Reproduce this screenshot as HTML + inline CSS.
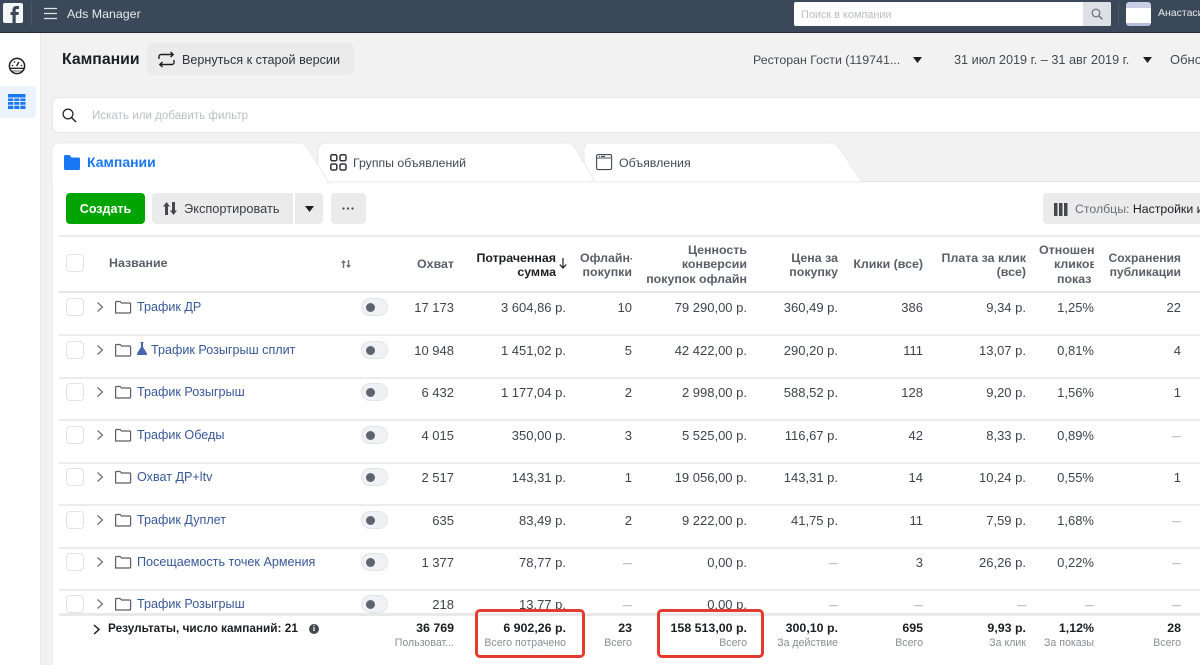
<!DOCTYPE html>
<html lang="ru"><head><meta charset="utf-8"><title>Ads Manager</title>
<style>
*{box-sizing:border-box}
html,body{margin:0;padding:0;width:1200px;height:665px;overflow:hidden}
body{position:relative;background:#f2f2f2;font-family:"Liberation Sans",sans-serif;color:#444950;font-size:13px}
.a{position:absolute;white-space:nowrap}
.top{left:0;top:0;width:1200px;height:33px;background:#3b4859;border-bottom:1px solid #232b36}
.side{left:0;top:33px;width:41px;height:632px;background:#fff;border-right:1px solid #e8e8e8}
.panel{left:52px;top:182px;width:1148px;height:483px;background:#fff}
.btn{background:#ebebeb;border-radius:5px}
.sep{left:59px;width:1141px;height:2px;background:#ececec}
.row{position:absolute;left:0;width:1200px;height:20px}
.row span{position:absolute;top:0;line-height:20px;text-align:right;white-space:nowrap;color:#3f434a}
.row span.d{font-size:9px;color:#85888d}
.c1{right:746px}.c2{right:634px}.c3{right:568px}.c4{right:453px}.c5{right:362px}.c6{right:277px}.c7{right:174px}.c8{right:106px}.c9{right:19px}
.row .nm{left:137px;top:-1px;text-align:left;color:#385898;font-size:12.6px}
.cb{position:absolute;left:66px;width:18px;height:18px;border:1px solid #e2e3e6;border-radius:4px;background:#fff}
.tg{position:absolute;left:361px;width:27px;height:18px;border-radius:9px;background:#f0f1f4;border:1px solid #e2e4e8}
.tg:after{content:"";position:absolute;left:3.500px;top:3.500px;width:9px;height:9px;border-radius:50%;background:#5d6470}
.h{position:absolute;text-align:right;font-weight:bold;color:#5a5f67;font-size:12.4px;line-height:14px;white-space:nowrap;overflow:hidden}
.f{position:absolute;top:621px;height:32px;text-align:right;white-space:nowrap}
.f b{display:block;color:#1c1e21;font-size:12.4px;line-height:15px}
.f i{display:block;font-style:normal;color:#8a8d91;font-size:10.6px;line-height:13px;margin-top:1px}
.red{position:absolute;top:609px;height:49px;border:3px solid #e53a30;border-radius:5px}
.ic{position:absolute;overflow:visible}
</style></head><body>

<div class="a top"></div>
<div class="a" style="left:3px;top:3px;width:20px;height:20px;background:#f4f5f7;border-radius:2px"></div>
<svg class="ic" style="left:3px;top:3px" width="20" height="20" viewBox="0 0 20 20"><path d="M9.500 20v-8H7.500V9H9.500V7C9.500 4.500 11 3 13.200 3h2.800v3h-1.800c-1 0-1.500.5-1.500 1.300V9h3.200l-.5 3h-2.700v8z" fill="#3b4859"/></svg>
<div class="a" style="left:31px;top:2px;width:1px;height:24px;background:#4a586a"></div>
<svg class="ic" style="left:44px;top:7px" width="14" height="13"><path d="M0 1.500h13M0 6.500h13M0 11.500h13" stroke="#dfe3e8" stroke-width="1.300" fill="none"/></svg>
<div class="a" style="left:67px;top:7px;color:#e6e9ed;font-size:12.400px;line-height:15px">Ads Manager</div>
<div class="a" style="left:794px;top:2px;width:317px;height:24px;background:#fff;border-radius:2px"></div>
<div class="a" style="left:1083px;top:2px;width:28px;height:24px;background:#dde0e4;border-radius:0 2px 2px 0"></div>
<div class="a" style="left:801px;top:8px;color:#b9bcc1;font-size:10.900px;line-height:14px">Поиск в компании</div>
<svg class="ic" style="left:1091px;top:8px" width="13" height="13"><circle cx="5" cy="5" r="3.800" fill="none" stroke="#6a717b" stroke-width="1.200"/><path d="M8 8l3.400 3.400" stroke="#6a717b" stroke-width="1.500"/></svg>
<div class="a" style="left:1118px;top:2px;width:1px;height:24px;background:#4a586a"></div>
<div class="a" style="left:1126px;top:2px;width:25px;height:24px;background:#fff;border-radius:3px;border-top:6px solid #c9cde6;border-bottom:3px solid #b7bce0"></div>
<div class="a" style="left:1158px;top:6px;color:#e6e9ed;font-size:10.500px;line-height:15px">Анастасия</div>

<div class="a side"></div>
<svg class="ic" style="left:8px;top:57px" width="18" height="18" viewBox="0 0 18 18"><circle cx="9" cy="9" r="7.600" fill="none" stroke="#1c1e21" stroke-width="1.500"/><path d="M2 11.300h14" stroke="#1c1e21" stroke-width="1.300"/><path d="M3.500 14h11" stroke="#1c1e21" stroke-width="0.700"/><path d="M8.500 9l2.400-4" stroke="#1c1e21" stroke-width="1.300"/><circle cx="4.500" cy="8.500" r=".8" fill="#1c1e21"/><circle cx="6.500" cy="5" r=".8" fill="#1c1e21"/><circle cx="13.500" cy="8.500" r=".8" fill="#1c1e21"/></svg>
<div class="a" style="left:0;top:86px;width:36px;height:32px;background:#edf3fd;border-radius:0 4px 4px 0"></div>
<svg class="ic" style="left:8px;top:94px" width="18" height="15" viewBox="0 0 18 15"><path d="M.5 0h16.500a.5.5 0 0 1 .5.5v3H0v-3zM0 4.500h5.300v2.500H0zM6.300 4.500h5v2.500h-5zM12.300 4.500h5.200v2.500h-5.200zM0 8h5.300v2.800H0zM6.300 8h5v2.800h-5zM12.300 8h5.200v2.800h-5.200zM0 11.800h5.300V15H0zM6.300 11.800h5V15h-5zM12.300 11.800h5.200V15h-5.200z" fill="#1877f2"/></svg>

<div class="a" style="left:62px;top:50px;color:#1c1e21;font-size:15.800px;font-weight:bold;line-height:20px">Кампании</div>
<div class="a btn" style="left:147px;top:43px;width:207px;height:32px"></div>
<svg class="ic" style="left:158px;top:51px" width="17" height="17" viewBox="0 0 17 17"><path d="M1 8V5.500A2 2 0 0 1 3 3.500h12M12.500 1l2.700 2.500L12.500 6M16 9v2.500a2 2 0 0 1-2 2H2M4.500 11l-2.700 2.500L4.500 16" fill="none" stroke="#1c1e21" stroke-width="1.400"/></svg>
<div class="a" style="left:182px;top:52px;color:#2f3237;font-size:12.600px;line-height:16px">Вернуться к старой версии</div>
<div class="a" style="left:753px;top:52px;color:#444950;font-size:12.400px;line-height:16px">Ресторан Гости (119741...</div>
<svg class="ic" style="left:913px;top:57px" width="9" height="6"><path d="M0 0h9L4.500 6z" fill="#1c1e21"/></svg>
<div class="a" style="left:954px;top:52px;color:#444950;font-size:12.700px;line-height:16px">31 июл 2019 г. – 31 авг 2019 г.</div>
<svg class="ic" style="left:1143px;top:57px" width="9" height="6"><path d="M0 0h9L4.500 6z" fill="#1c1e21"/></svg>
<div class="a" style="left:1170px;top:52px;color:#444950;font-size:13px;line-height:16px">Обновить</div>

<div class="a" style="left:52px;top:97px;width:1160px;height:36px;background:#fff;border:1px solid #e6e6e6;border-radius:7px"></div>
<svg class="ic" style="left:62px;top:108px" width="15" height="15"><circle cx="6" cy="6" r="4.900" fill="none" stroke="#1c1e21" stroke-width="1.200"/><path d="M9.500 9.500l4.500 4.500" stroke="#1c1e21" stroke-width="1.400"/></svg>
<div class="a" style="left:92px;top:108px;color:#bcc0c4;font-size:11.600px;line-height:15px">Искать или добавить фильтр</div>

<div class="a panel"></div>
<svg class="ic" style="left:0;top:0" width="1200" height="200">
<path d="M52 181.500H1200" stroke="#e3e3e3"/>
<path d="M584 182V151q0-8 8-8h238q7 0 10 6l22 33z" fill="#fff" stroke="#e8e8e8"/>
<path d="M318 182V151q0-8 8-8h240q7 0 10 6l19 33z" fill="#fff" stroke="#e8e8e8"/>
<path d="M52 183V151q0-8 8-8h238q7 0 10 6l21 34z" fill="#fff" stroke="#ececec"/>
<path d="M53 180h274v4H53z" fill="#fff"/>
</svg>
<svg class="ic" style="left:64px;top:155px" width="16" height="15" viewBox="0 0 16 15"><path d="M1.500 0h4l2 2.500h7a1.500 1.500 0 0 1 1.500 1.500v9.500a1.500 1.500 0 0 1-1.500 1.500h-13A1.500 1.500 0 0 1 0 13.500v-12A1.500 1.500 0 0 1 1.500 0z" fill="#1877f2"/></svg>
<div class="a" style="left:87px;top:154px;color:#1877f2;font-size:14px;font-weight:bold;line-height:17px">Кампании</div>
<svg class="ic" style="left:330px;top:154px" width="17" height="17" fill="none" stroke="#2f3237" stroke-width="1.500"><rect x=".8" y=".8" width="6" height="6" rx="1.500"/><rect x="10" y=".8" width="6" height="6" rx="1.500"/><rect x=".8" y="10" width="6" height="6" rx="1.500"/><rect x="10" y="10" width="6" height="6" rx="1.500"/></svg>
<div class="a" style="left:353px;top:155px;color:#444950;font-size:12.300px;line-height:16px">Группы объявлений</div>
<svg class="ic" style="left:596px;top:154px" width="16" height="16" fill="none" stroke="#444950" stroke-width="1.100"><rect x=".6" y=".6" width="15" height="15" rx="1.500"/><path d="M1 4h14M3 2.400h1M5 2.400h4" /></svg>
<div class="a" style="left:619px;top:155px;color:#444950;font-size:12.400px;line-height:16px">Объявления</div>

<div class="a" style="left:66px;top:193px;width:79px;height:31px;background:#00a400;border-radius:4px;color:#fff;font-weight:bold;font-size:12.500px;line-height:32px;text-align:center">Создать</div>
<div class="a btn" style="left:152px;top:193px;width:141px;height:31px;border-radius:4px 0 0 4px"></div>
<svg class="ic" style="left:163px;top:202px" width="14" height="14" viewBox="0 0 14 14"><path d="M3.500 0L7 4.500H5V13H2V4.500H0zM10.500 13L7 8.500H9V0h3v8.500h2z" fill="#444950"/></svg>
<div class="a" style="left:184px;top:201px;color:#3a3d42;font-size:12.800px;line-height:16px">Экспортировать</div>
<div class="a btn" style="left:295px;top:193px;width:28px;height:31px;border-radius:0 4px 4px 0"></div>
<svg class="ic" style="left:305px;top:206px" width="9" height="6"><path d="M0 0h9L4.500 6z" fill="#1c1e21"/></svg>
<div class="a btn" style="left:331px;top:193px;width:35px;height:31px;border-radius:4px"></div>
<svg class="ic" style="left:342px;top:207px" width="12" height="3" fill="#444950"><circle cx="1.500" cy="1.500" r="1.100"/><circle cx="6" cy="1.500" r="1.100"/><circle cx="10.500" cy="1.500" r="1.100"/></svg>
<div class="a btn" style="left:1043px;top:193px;width:170px;height:31px;border-radius:4px"></div>
<svg class="ic" style="left:1054px;top:203px" width="14" height="13" fill="#444950"><rect width="3.500" height="13"/><rect x="5" width="3.500" height="13"/><rect x="10" width="3.500" height="13"/></svg>
<div class="a" style="left:1075px;top:201px;color:#6b6f76;font-size:12.300px;line-height:16px">Столбцы: <span style="color:#1c1e21">Настройки и</span></div>

<!-- table header -->
<div class="a" style="left:59px;top:235px;width:1141px;height:2px;background:#ececec"></div>
<div class="a" style="left:59px;top:291px;width:1141px;height:2px;background:#e6e6e6"></div>
<div class="a" style="left:52px;top:182px;width:1px;height:483px;background:#ececec"></div>
<div class="cb" style="top:254px"></div>
<div class="a" style="left:109px;top:256px;font-weight:bold;color:#5a5f67;font-size:12.400px;line-height:15px">Название</div>
<svg class="ic" style="left:341px;top:260px" width="10" height="8" fill="#6b6f76"><path d="M2.500 0L5 3H3.200v5H1.800V3H0zM7.500 8L5 5h1.800V0h1.400v5H10z"/></svg>
<div class="h" style="right:746px;top:257px;width:60px">Охват</div>
<div class="h" style="right:644px;top:251px;width:100px;color:#1c1e21">Потраченная<br>сумма</div>
<svg class="ic" style="left:559px;top:258px" width="8" height="11"><path d="M4 0v9.500M.8 6.500L4 10l3.200-3.500" fill="none" stroke="#1c1e21" stroke-width="1.200"/></svg>
<div class="h" style="right:568px;top:251px;width:52px">Офлайн-<br>покупки</div>
<div class="h" style="right:453px;top:243px;width:110px;line-height:14.400px">Ценность<br>конверсии<br>покупок офлайн</div>
<div class="h" style="right:362px;top:251px;width:80px">Цена за<br>покупку</div>
<div class="h" style="right:277px;top:257px;width:80px">Клики (все)</div>
<div class="h" style="right:174px;top:251px;width:100px">Плата за клик<br>(все)</div>
<div class="h" style="right:106px;top:243px;width:55px;text-align:left;line-height:14.400px">Отношение<br><span style="margin-left:15px">кликов</span><br><span style="margin-left:18px">показ</span></div>
<div class="h" style="right:19px;top:251px;width:90px;font-size:12.100px">Сохранения<br>публикации</div>

<div class="a sep" style="top:334px"></div>
<div class="a sep" style="top:377px"></div>
<div class="a sep" style="top:419px"></div>
<div class="a sep" style="top:462px"></div>
<div class="a sep" style="top:504px"></div>
<div class="a sep" style="top:547px"></div>
<div class="a sep" style="top:589px"></div>

<!-- rows -->
<div class="row" style="top:298px"><span class="nm">Трафик ДР</span><span class="c1">17 173</span><span class="c2">3 604,86 р.</span><span class="c3">10</span><span class="c4">79 290,00 р.</span><span class="c5">360,49 р.</span><span class="c6">386</span><span class="c7">9,34 р.</span><span class="c8">1,25%</span><span class="c9">22</span></div>
<div class="row" style="top:341px"><span class="nm" style="left:151px">Трафик Розыгрыш сплит</span><span class="c1">10 948</span><span class="c2">1 451,02 р.</span><span class="c3">5</span><span class="c4">42 422,00 р.</span><span class="c5">290,20 р.</span><span class="c6">111</span><span class="c7">13,07 р.</span><span class="c8">0,81%</span><span class="c9">4</span></div>
<div class="row" style="top:383px"><span class="nm">Трафик Розыгрыш</span><span class="c1">6 432</span><span class="c2">1 177,04 р.</span><span class="c3">2</span><span class="c4">2 998,00 р.</span><span class="c5">588,52 р.</span><span class="c6">128</span><span class="c7">9,20 р.</span><span class="c8">1,56%</span><span class="c9">1</span></div>
<div class="row" style="top:426px"><span class="nm">Трафик Обеды</span><span class="c1">4 015</span><span class="c2">350,00 р.</span><span class="c3">3</span><span class="c4">5 525,00 р.</span><span class="c5">116,67 р.</span><span class="c6">42</span><span class="c7">8,33 р.</span><span class="c8">0,89%</span><span class="c9 d">—</span></div>
<div class="row" style="top:468px"><span class="nm">Охват ДР+ltv</span><span class="c1">2 517</span><span class="c2">143,31 р.</span><span class="c3">1</span><span class="c4">19 056,00 р.</span><span class="c5">143,31 р.</span><span class="c6">14</span><span class="c7">10,24 р.</span><span class="c8">0,55%</span><span class="c9">1</span></div>
<div class="row" style="top:511px"><span class="nm">Трафик Дуплет</span><span class="c1">635</span><span class="c2">83,49 р.</span><span class="c3">2</span><span class="c4">9 222,00 р.</span><span class="c5">41,75 р.</span><span class="c6">11</span><span class="c7">7,59 р.</span><span class="c8">1,68%</span><span class="c9 d">—</span></div>
<div class="row" style="top:553px"><span class="nm">Посещаемость точек Армения</span><span class="c1">1 377</span><span class="c2">78,77 р.</span><span class="c3 d">—</span><span class="c4">0,00 р.</span><span class="c5 d">—</span><span class="c6">3</span><span class="c7">26,26 р.</span><span class="c8">0,22%</span><span class="c9 d">—</span></div>
<div class="row" style="top:595px"><span class="nm">Трафик Розыгрыш</span><span class="c1">218</span><span class="c2">13,77 р.</span><span class="c3 d">—</span><span class="c4">0,00 р.</span><span class="c5 d">—</span><span class="c6 d">—</span><span class="c7 d">—</span><span class="c8 d">—</span><span class="c9 d">—</span></div>

<svg class="ic" style="left:137px;top:342px" width="10" height="13" viewBox="0 0 10 13"><path d="M3.500 0h3v1h-.5v4l4 6.500q.4 1.500-1 1.500H1q-1.400 0-1-1.500L4 5V1h-.5z" fill="#4a66ad"/></svg>

<div class="cb" style="top:298px"></div><div class="cb" style="top:341px"></div><div class="cb" style="top:383px"></div><div class="cb" style="top:426px"></div><div class="cb" style="top:468px"></div><div class="cb" style="top:511px"></div><div class="cb" style="top:553px"></div><div class="cb" style="top:595px"></div>
<div class="tg" style="top:298px"></div><div class="tg" style="top:341px"></div><div class="tg" style="top:383px"></div><div class="tg" style="top:426px"></div><div class="tg" style="top:468px"></div><div class="tg" style="top:511px"></div><div class="tg" style="top:553px"></div><div class="tg" style="top:595px"></div>

<svg class="ic" style="left:0;top:0" width="200" height="665" fill="none">
<g stroke="#6a6f76" stroke-width="1.200"><path d="M97.500 302.500l5 4.500-5 4.500M97.500 345.500l5 4.500-5 4.500M97.500 387.500l5 4.500-5 4.500M97.500 430.500l5 4.500-5 4.500M97.500 472.500l5 4.500-5 4.500M97.500 515.500l5 4.500-5 4.500M97.500 557.500l5 4.500-5 4.500M97.500 599.500l5 4.500-5 4.500"/></g>
<g stroke="#5a5d62" stroke-width="1.200"><path d="M115.600 313v-10.500q0-1 1-1h3.500l1.500 1.500h8q1 0 1 1V312q0 1-1 1z"/><path d="M115.600 356v-10.500q0-1 1-1h3.500l1.500 1.500h8q1 0 1 1V355q0 1-1 1z"/><path d="M115.600 398v-10.500q0-1 1-1h3.500l1.500 1.500h8q1 0 1 1V397q0 1-1 1z"/><path d="M115.600 441v-10.500q0-1 1-1h3.500l1.500 1.500h8q1 0 1 1V440q0 1-1 1z"/><path d="M115.600 483v-10.500q0-1 1-1h3.500l1.500 1.500h8q1 0 1 1V482q0 1-1 1z"/><path d="M115.600 526v-10.500q0-1 1-1h3.500l1.500 1.500h8q1 0 1 1V525q0 1-1 1z"/><path d="M115.600 568v-10.500q0-1 1-1h3.500l1.500 1.500h8q1 0 1 1V567q0 1-1 1z"/><path d="M115.600 610v-10.500q0-1 1-1h3.500l1.500 1.500h8q1 0 1 1V609q0 1-1 1z"/></g>
</svg>

<!-- footer -->
<div class="a" style="left:53px;top:613px;width:1147px;height:52px;background:#fff"></div>
<div class="a" style="left:59px;top:613px;width:1141px;height:3px;background:#e9e9e9"></div>
<svg class="ic" style="left:93px;top:624px" width="8" height="11"><path d="M1 1l5 4.500L1 10" fill="none" stroke="#1c1e21" stroke-width="1.500"/></svg>
<div class="a" style="left:108px;top:621px;font-weight:bold;color:#1c1e21;font-size:11.800px;line-height:15px">Результаты, число кампаний: 21</div>
<div class="a" style="left:309px;top:624px;width:10px;height:10px;border-radius:50%;background:#444950;color:#fff;font:bold 8px/10px 'Liberation Serif',serif;text-align:center">i</div>
<div class="f c1"><b>36 769</b><i>Пользоват...</i></div>
<div class="f c2"><b>6 902,26 р.</b><i>Всего потрачено</i></div>
<div class="f c3"><b>23</b><i>Всего</i></div>
<div class="f c4"><b>158 513,00 р.</b><i>Всего</i></div>
<div class="f c5"><b>300,10 р.</b><i>За действие</i></div>
<div class="f c6"><b>695</b><i>Всего</i></div>
<div class="f c7"><b>9,93 р.</b><i>За клик</i></div>
<div class="f c8"><b>1,12%</b><i>За показы</i></div>
<div class="f c9"><b>28</b><i>Всего</i></div>
<div class="red" style="left:475px;width:110px"></div>
<div class="red" style="left:657px;width:107px"></div>
</body></html>
